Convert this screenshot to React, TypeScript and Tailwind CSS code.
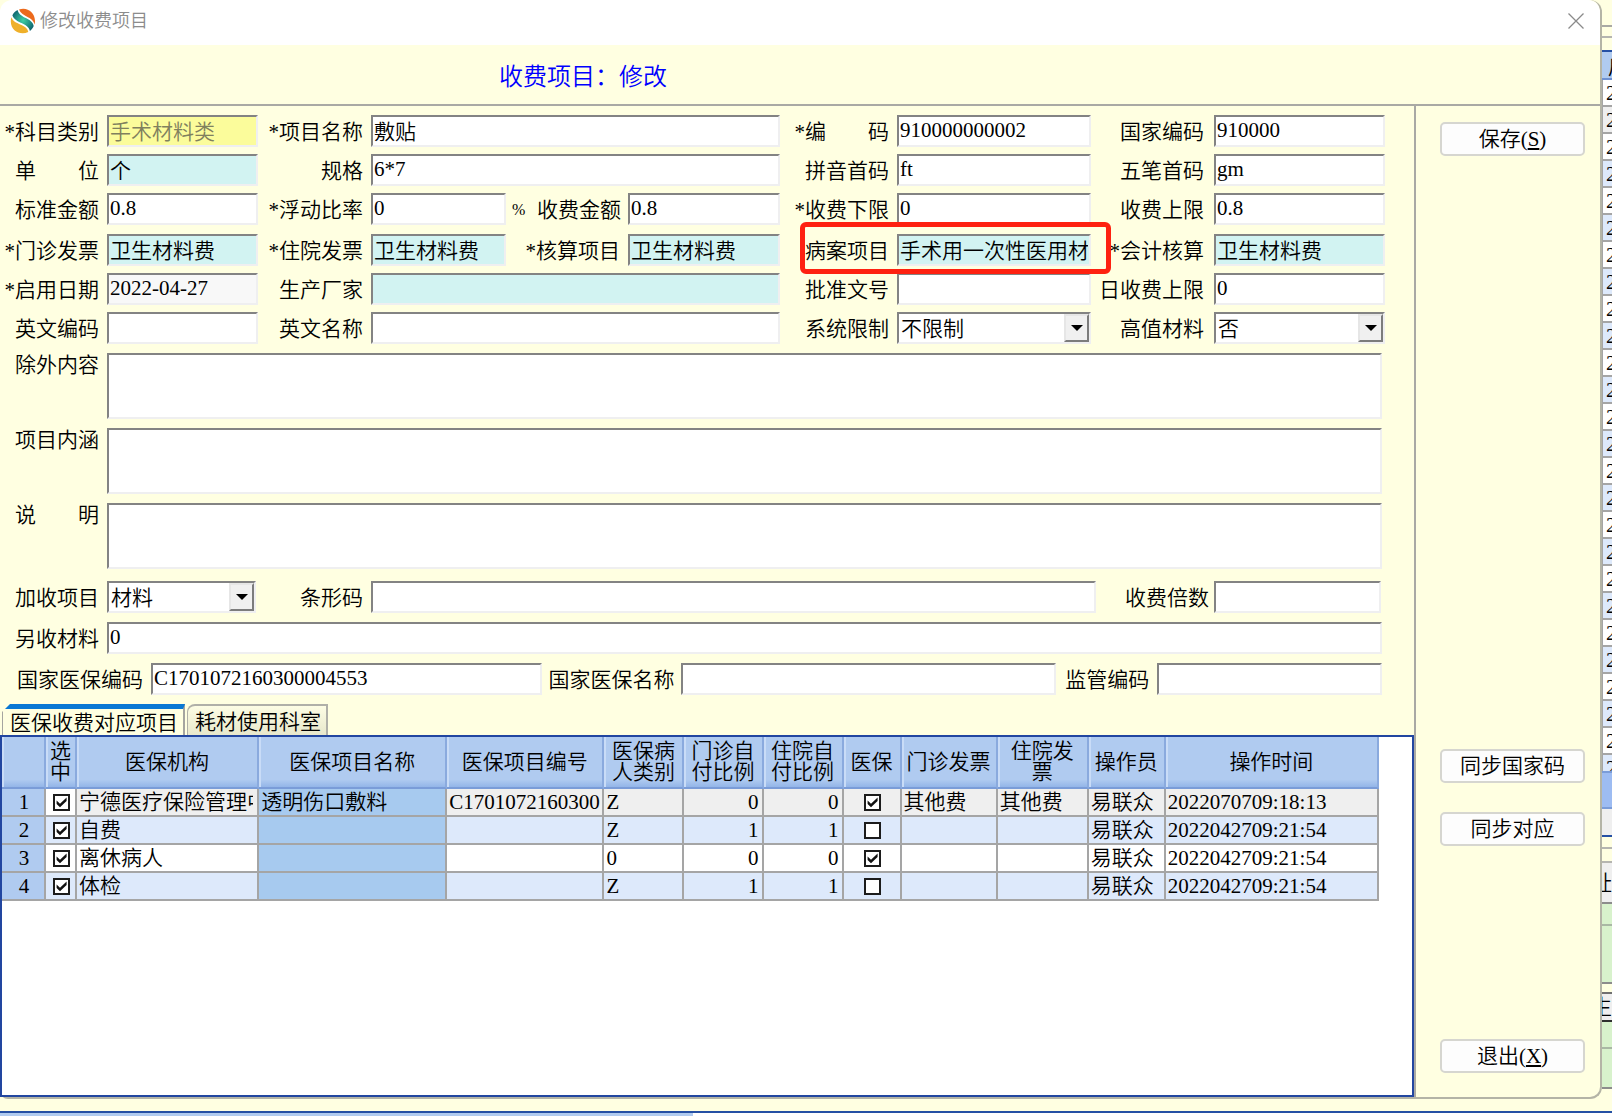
import React from "react";

const SUNKEN =
  "border-2 border-t-[#838383] border-l-[#838383] border-r-[#efeff0] border-b-[#efeff0] rounded-none outline-none";
const LABEL = "whitespace-pre text-right leading-7 pt-[3px]";

type Tone = "white" | "cyan" | "yellow" | "grey";
const tones: Record<Tone, string> = {
  white: "bg-white",
  cyan: "bg-[#d2f3f2]",
  yellow: "bg-[#fbfc9b] text-[#80805e]",
  grey: "bg-[#f8f8f8]",
};

function Field({
  id,
  label,
  value = "",
  tone = "white",
  span = "",
  labelClass = "pr-2",
}: {
  id: string;
  label: string;
  value?: string;
  tone?: Tone;
  span?: string;
  labelClass?: string;
}) {
  return (
    <>
      <label htmlFor={id} className={`${LABEL} ${labelClass}`}>
        {label}
      </label>
      <input
        id={id}
        type="text"
        defaultValue={value}
        className={`h-8 w-full min-w-0 px-px pb-[2px] ${SUNKEN} ${tones[tone]} ${span}`}
      />
    </>
  );
}

function Choice({
  id,
  label,
  options,
  labelClass = "pr-2",
}: {
  id: string;
  label: string;
  options: string[];
  labelClass?: string;
}) {
  return (
    <>
      <label htmlFor={id} className={`${LABEL} ${labelClass}`}>
        {label}
      </label>
      <div className="relative h-8 min-w-0">
        <select
          id={id}
          className={`h-8 w-full appearance-none bg-white pl-[2px] ${SUNKEN}`}
        >
          {options.map((o) => (
            <option key={o}>{o}</option>
          ))}
        </select>
        <span className="pointer-events-none absolute top-[2px] right-[2px] flex h-7 w-[25px] items-center justify-center border-2 border-t-[#e6e6e6] border-r-[#7c7c7c] border-b-[#7c7c7c] border-l-[#e6e6e6] bg-[#f0f0f0]">
          <svg width="12" height="6" viewBox="0 0 12 6" aria-hidden="true">
            <path d="M0 0h12L6 6z" fill="#000" />
          </svg>
        </span>
      </div>
    </>
  );
}

function Note({ id, label }: { id: string; label: string }) {
  return (
    <div className="grid grid-cols-[107px_1fr] pr-8">
      <label htmlFor={id} className="pr-2 text-right leading-6 whitespace-pre">
        {label}
      </label>
      <textarea id={id} className={`block h-[66px] w-full resize-none bg-white ${SUNKEN}`} />
    </div>
  );
}

function Tick({ name, on }: { name: string; on: boolean }) {
  return (
    <span className="relative mx-auto flex size-[17px]">
      <input
        type="checkbox"
        aria-label={name}
        defaultChecked={on}
        className="peer size-[17px] appearance-none border-2 border-[#1c1c1c] bg-white"
      />
      <svg
        viewBox="0 0 17 17"
        aria-hidden="true"
        className="pointer-events-none absolute inset-0 hidden size-[17px] peer-checked:block"
      >
        <path d="M3.600 6.600v3.400l3.400 3.300 6.600-6.200V3.600L7 9.800z" fill="#111" />
      </svg>
    </span>
  );
}

const columns = [
  { title: "", width: "w-[44px]" },
  { title: "选中", width: "w-[31px]" },
  { title: "医保机构", width: "w-[182px]" },
  { title: "医保项目名称", width: "w-[188px]" },
  { title: "医保项目编号", width: "w-[157px]" },
  { title: "医保病人类别", width: "w-[80px]" },
  { title: "门诊自付比例", width: "w-[79px]" },
  { title: "住院自付比例", width: "w-[80px]" },
  { title: "医保", width: "w-[58px]" },
  { title: "门诊发票", width: "w-[96px]" },
  { title: "住院发票", width: "w-[91px]" },
  { title: "操作员", width: "w-[77px]" },
  { title: "操作时间", width: "w-[213px]" },
];

const rows = [
  { org: "宁德医疗保险管理中心", item: "透明伤口敷料", code: "C1701072160300004553", kind: "Z", out: "0", inn: "0", med: true, inv1: "其他费", inv2: "其他费", time: "2022070709:18:13", bg: "bg-[#efefef]", tickBg: "bg-white" },
  { org: "自费", item: "", code: "", kind: "Z", out: "1", inn: "1", med: false, inv1: "", inv2: "", time: "2022042709:21:54", bg: "bg-[#dde9fb]", tickBg: "bg-[#dde9fb]" },
  { org: "离休病人", item: "", code: "", kind: "0", out: "0", inn: "0", med: true, inv1: "", inv2: "", time: "2022042709:21:54", bg: "bg-white", tickBg: "bg-white" },
  { org: "体检", item: "", code: "", kind: "Z", out: "1", inn: "1", med: false, inv1: "", inv2: "", time: "2022042709:21:54", bg: "bg-[#dde9fb]", tickBg: "bg-[#dde9fb]" },
];

const CELL =
  "h-[28px] overflow-hidden whitespace-nowrap border-r-2 border-b-2 border-[#a5a5a5] p-0 pl-[2px] leading-[26px]";

function Grid() {
  return (
    <table className="w-[calc(100%-33px)] table-fixed border-separate border-spacing-0">
      <colgroup>
        {columns.map((c, i) => (
          <col key={i} className={c.width} />
        ))}
      </colgroup>
      <thead>
        <tr>
          {columns.map((c, i) => (
            <th
              key={i}
              scope="col"
              className="h-[52px] border-r-2 border-b-2 border-r-[#8aaade] border-b-[#7a9cd8] bg-linear-to-b from-[#b0cbf0] from-85% to-[#93b5e8] px-1 py-0 leading-[21px] font-[350] shadow-[inset_2px_0_#c9dcf7]"
            >
              {c.title}
            </th>
          ))}
        </tr>
      </thead>
      <tbody>
        {rows.map((r, i) => (
          <tr key={i} className={r.bg}>
            <th scope="row" className={`${CELL} bg-[#b0cbf0] text-center font-[350]`}>
              {i + 1}
            </th>
            <td className={`${CELL} ${r.tickBg} pl-0`}>
              <Tick name={`选中 ${r.org}`} on />
            </td>
            <td className={CELL}>
              <div className="mr-1 overflow-hidden">{r.org}</div>
            </td>
            <td className={`${CELL} bg-[#a7caef]`}>{r.item}</td>
            <td className={CELL}>
              <div className="mr-[2px] overflow-hidden">{r.code}</div>
            </td>
            <td className={CELL}>{r.kind}</td>
            <td className={`${CELL} pr-[3px] text-right`}>{r.out}</td>
            <td className={`${CELL} pr-[3px] text-right`}>{r.inn}</td>
            <td className={`${CELL} pl-0`}>
              <Tick name={`医保 ${r.org}`} on={r.med} />
            </td>
            <td className={CELL}>{r.inv1}</td>
            <td className={CELL}>{r.inv2}</td>
            <td className={CELL}>易联众</td>
            <td className={CELL}>{r.time}</td>
          </tr>
        ))}
      </tbody>
    </table>
  );
}

const BUTTON =
  "h-[34px] w-full rounded-[5px] border-2 border-[#d6d6d0] bg-[#fdfdfd] leading-7 hover:bg-[#eef4fc]";

const FORM_GRID =
  "grid grid-cols-[107px_151fr_113px_135fr_122px_152fr_117px_194fr_123px_171fr] gap-y-[7px] pr-[29px]";

const TAB = "h-[31px] overflow-hidden border-r-2 border-l px-[5px] pl-[7px]";

function Logo() {
  return (
    <svg className="size-[26px]" viewBox="0 0 26 26" aria-hidden="true">
      <defs>
        <radialGradient id="teal" cx="0.5" cy="0.5" r="0.6">
          <stop offset="0" stopColor="#3fd0a4" />
          <stop offset="1" stopColor="#0c5f6c" />
        </radialGradient>
      </defs>
      <path d="M9 1.400C17-1.400 25 4 25 13c0 1.300-.1 2.400-.5 3.500C23.500 8.500 12 9 9 1.400z" fill="#ec6a1c" />
      <path d="M7.600 1.900C9.500 10.500 22.500 9.500 23.700 18c-.8 2-2.200 3.700-3.800 5C18.500 14.500 5 15.500 2.400 7.200c.9-2.200 2.900-4.200 5.200-5.300z" fill="url(#teal)" />
      <path d="M1.500 9.200C3.500 17 17 15.500 18.300 24 11 27.800.6 23.500.8 13c0-1.300.2-2.600.7-3.800z" fill="#efb02a" />
    </svg>
  );
}

const backRows = Array.from({ length: 26 }, (_, i) => i);

function BackPage() {
  return (
    <div className="flex w-[10px] shrink-0 flex-col overflow-hidden" aria-hidden="true">
      <div className="h-[27px] border-b-2 border-[#a9a9a4]" />
      <div className="h-[11px] border-b-2 border-[#b5b5b0]" />
      <div className="h-[12px]" />
      <div className="h-[30px] shrink-0 overflow-hidden border-t-2 border-b-2 border-t-[#2550a4] border-b-[#6f92d4] bg-[#b0cbf0] pl-[6px] leading-[30px]">
        后
      </div>
      <div className="h-[693px] shrink-0 overflow-hidden border-b-2 border-[#7a9cd8] bg-white">
        {backRows.map((i) => (
          <div
            key={i}
            className={`h-[27px] overflow-hidden border-b-2 border-l border-[#a5a5a5] pl-[3px] leading-[27px] ${
              i === 1 ? "bg-[#efefef]" : i % 2 ? "bg-[#dde9fb]" : "bg-white"
            }`}
          >
            2
          </div>
        ))}
      </div>
      <div className="h-[36px] shrink-0 border-b-2 border-[#7a9cd8] bg-[#9dbcf2]" />
      <div className="h-[28px] shrink-0 border-b-2 border-[#2550a4] bg-[#efefef]" />
      <div className="h-[12px] shrink-0 border-b-2 border-[#b5b5b0]" />
      <div className="h-[14px] shrink-0 border-b-2 border-[#b5b5b0]" />
      <div className="flex h-[41px] shrink-0 justify-end overflow-hidden border-b-2 border-[#8c8c8c] bg-[#efefef] leading-[40px]">
        址
      </div>
      <div className="h-[22px] shrink-0 border-b-2 border-[#a9b8a4] bg-[#d8f2cc]" />
      <div className="h-[58px] shrink-0 border-b-2 border-[#8c8c8c] bg-[#d8f2cc]" />
      <div className="h-[8px] shrink-0" />
      <div className="flex h-[30px] shrink-0 justify-end overflow-hidden border-t-2 border-b-2 border-t-[#707070] border-b-[#303030] bg-[#efefef] leading-[26px]">
        生
      </div>
      <div className="h-[27px] shrink-0 border-b-2 border-[#a9b8a4] bg-[#d8f2cc]" />
      <div className="h-[40px] shrink-0 border-b-2 border-[#8c8c8c] bg-[#d8f2cc]" />
    </div>
  );
}

export default function App() {
  return (
    <div className="flex min-h-screen flex-col overflow-hidden bg-[#ffffe1] font-['Liberation_Serif','Noto_Sans_CJK_SC',sans-serif] text-[21px] font-[350] text-black">
      <div className="flex flex-1">
        <main className="flex min-w-0 flex-1 flex-col rounded-xl rounded-tl-lg rounded-bl-lg border-r-2 border-b-2 border-[#b4b4a6] bg-[#ffffe1]">
          <header className="flex h-[45px] items-center justify-between rounded-t-xl bg-white pr-4 pb-1 pl-[10px]">
            <div className="flex items-center gap-1">
              <Logo />
              <h1 className="text-[18px] leading-6 text-[#8c8c8c]">修改收费项目</h1>
            </div>
            <button type="button" aria-label="关闭" className="flex size-4 items-center justify-center">
              <svg width="16" height="16" viewBox="0 0 16 16" stroke="#8a8a8a" strokeWidth="1.300" aria-hidden="true">
                <path d="M.5.5l15 15M15.500.5l-15 15" />
              </svg>
            </button>
          </header>
          <div className="h-[61px] border-b-2 border-[#a9a9a4] pt-[18px] pl-[499px]">
            <h2 className="text-2xl leading-7 text-[#0000ff]">收费项目：修改</h2>
          </div>

          <div className="flex flex-1">
            <div className="flex min-w-0 flex-1 flex-col pt-[9px]">
              <form className="flex flex-col gap-[9px]">
                <div className={FORM_GRID}>
                  <Field id="category" label="*科目类别" value="手术材料类" tone="yellow" />
                  <Field id="name" label="*项目名称" value="敷贴" span="col-span-3" />
                  <Field id="code" label="*编　　码" value="910000000002" />
                  <Field id="natcode" label="国家编码" value="910000" labelClass="pr-[10px]" />

                  <Field id="unit" label="单　　位" value="个" tone="cyan" />
                  <Field id="spec" label="规格" value="6*7" span="col-span-3" />
                  <Field id="pinyin" label="拼音首码" value="ft" />
                  <Field id="wubi" label="五笔首码" value="gm" labelClass="pr-[10px]" />

                  <Field id="std" label="标准金额" value="0.8" />
                  <Field id="rate" label="*浮动比率" value="0" />
                  <label htmlFor="fee" className={`${LABEL} flex justify-between pr-[7px] pl-[6px]`}>
                    <span className="text-base leading-7">%</span>
                    <span>收费金额</span>
                  </label>
                  <input id="fee" type="text" defaultValue="0.8" className={`h-8 w-full min-w-0 bg-white px-px pb-[2px] ${SUNKEN}`} />
                  <Field id="low" label="*收费下限" value="0" />
                  <Field id="high" label="收费上限" value="0.8" labelClass="pr-[10px]" />
                </div>

                <div className={FORM_GRID}>
                  <Field id="opinv" label="*门诊发票" value="卫生材料费" tone="cyan" />
                  <Field id="ipinv" label="*住院发票" value="卫生材料费" tone="cyan" />
                  <Field id="acct" label="*核算项目" value="卫生材料费" tone="cyan" />
                  <div className="relative col-span-2 grid grid-cols-[117px_1fr]">
                    <Field id="record" label="病案项目" value="手术用一次性医用材" tone="cyan" />
                    <div className="pointer-events-none absolute -top-3 -right-5 -bottom-2 left-5 rounded-md border-[5px] border-[#fe2110]" />
                  </div>
                  <Field id="ledger" label="*会计核算" value="卫生材料费" tone="cyan" labelClass="pr-[10px]" />

                  <Field id="date" label="*启用日期" value="2022-04-27" tone="grey" />
                  <Field id="maker" label="生产厂家" tone="cyan" span="col-span-3" />
                  <Field id="approval" label="批准文号" />
                  <Field id="daily" label="日收费上限" value="0" labelClass="pr-[10px]" />

                  <Field id="encode" label="英文编码" />
                  <Field id="enname" label="英文名称" span="col-span-3" />
                  <Choice id="limit" label="系统限制" options={["不限制", "限制"]} />
                  <Choice id="highval" label="高值材料" options={["否", "是"]} labelClass="pr-[10px]" />
                </div>

                <Note id="except" label="除外内容" />
                <Note id="content" label="项目内涵" />
                <Note id="remark" label="说　　明" />

                <div className="grid grid-cols-[107px_149fr_115px_725fr_118px_167fr] pt-[3px] pr-[33px]">
                  <Choice id="extra" label="加收项目" options={["材料", "无"]} />
                  <Field id="barcode" label="条形码" />
                  <Field id="times" label="收费倍数" labelClass="pr-[5px]" />
                </div>
                <div className="grid grid-cols-[107px_1fr] pr-8">
                  <Field id="other" label="另收材料" value="0" />
                </div>
                <div className="grid grid-cols-[151px_391fr_139px_376fr_101px_225fr] pr-8">
                  <Field id="micode" label="国家医保编码" value="C1701072160300004553" />
                  <Field id="miname" label="国家医保名称" labelClass="pr-[6px]" />
                  <Field id="supervise" label="监管编码" />
                </div>
              </form>

              <div role="tablist" className="mt-[9px] flex items-end gap-[2px] pl-[2px]">
                <button
                  type="button"
                  role="tab"
                  aria-selected="true"
                  className={`${TAB} border-t-[5px] border-t-[#0a78d4] border-r-[#a5a5a0] border-l-[#a5a5a0] bg-[#ffffe1] leading-7 [clip-path:polygon(8px_0,100%_0,100%_100%,0_100%,0_8px)]`}
                >
                  医保收费对应项目
                </button>
                <button
                  type="button"
                  role="tab"
                  aria-selected="false"
                  className={`${TAB} rounded-tl-lg border-t-2 border-[#b0b0a8] bg-linear-to-b from-[#fdfde4] to-[#e8e8cc] leading-8`}
                >
                  耗材使用科室
                </button>
              </div>
              <section className="flex-1 border-2 border-[#2246a0] bg-white">
                <Grid />
              </section>
            </div>

            <aside className="flex w-[186px] shrink-0 flex-col border-l-2 border-[#a9a9a4] pt-4 pr-[15px] pb-6 pl-6">
              <button type="button" className={BUTTON}>
                保存(<u>S</u>)
              </button>
              <div className="flex flex-1 flex-col justify-end gap-[29px] pb-[193px]">
                <button type="button" className={BUTTON}>同步国家码</button>
                <button type="button" className={BUTTON}>同步对应</button>
              </div>
              <button type="button" className={BUTTON}>
                退出(<u>X</u>)
              </button>
            </aside>
          </div>
        </main>
        <BackPage />
      </div>
      <div className="mt-3 flex h-[5px] border-t-2 border-[#2550a4] bg-white">
        <div className="w-[43%] bg-[#b0cbf0]" />
      </div>
    </div>
  );
}
